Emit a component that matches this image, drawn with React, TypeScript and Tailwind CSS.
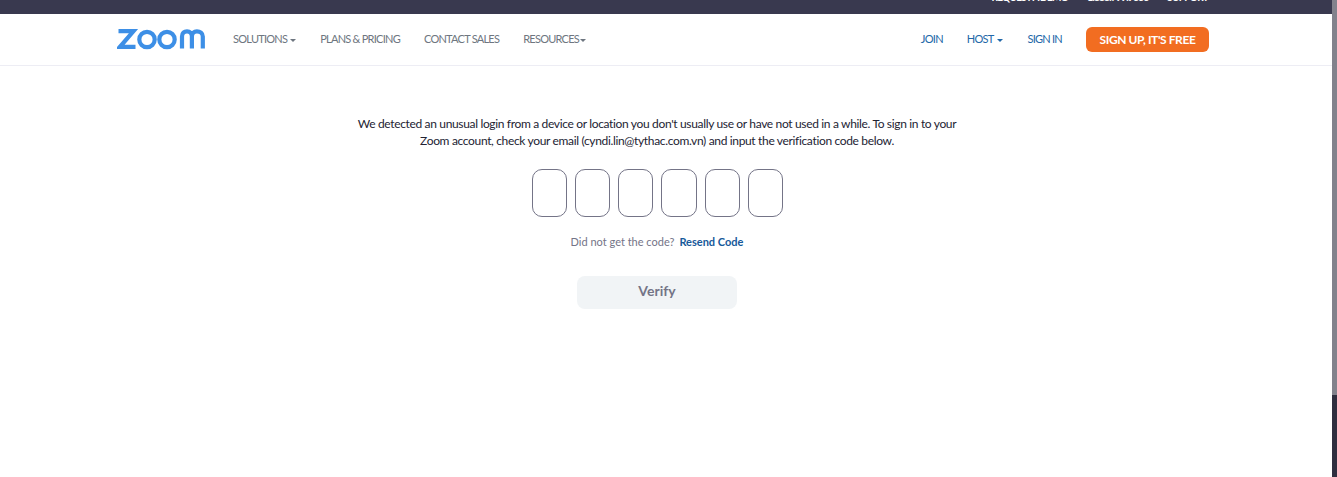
import React from 'react';

function Caret({ className }: { className: string }) {
    return <span className={`inline-block align-middle border-x-[3px] border-t-[3.5px] border-x-transparent border-t-current ${className}`} />;
}

function ZoomLogo() {
    return (
        <svg className="-mt-[2px]" width="89" height="22" viewBox="0 0 89 22" fill="none" stroke="#3d8fe6" strokeWidth="4.2" aria-label="zoom">
            <path d="M1.5 3.2H16.5L3 18.8H18.5" strokeLinejoin="miter" />
            <circle cx="30" cy="11.5" r="7.7" />
            <circle cx="50" cy="11.5" r="7.7" />
            <path d="M65 20.5V8.5C65 5 67.2 3.4 70 3.4C73 3.4 74.9 5.4 74.9 8.5V20.5M74.9 8.5C74.9 5.4 76.9 3.4 79.9 3.4C83 3.4 85.8 5.2 85.8 8.5V20.5" />
        </svg>
    );
}

export default function App() {
    return (
        <div className="flex h-[477px] w-full overflow-hidden bg-white font-['Lato',sans-serif]">
            <div className="flex min-w-0 flex-1 flex-col">
                {/* Top strip, scrolled mostly out of view */}
                <div className="flex h-[14px] items-end justify-end gap-[19px] overflow-hidden bg-[#39394f] pr-[124px] pb-[10px] text-[10px] font-bold leading-[14px] tracking-[-0.7px] text-white">
                    <span className="shrink-0">REQUEST A DEMO</span>
                    <span className="shrink-0">1.888.799.9666</span>
                    <span className="shrink-0">SUPPORT</span>
                </div>

                {/* Nav */}
                <nav className="flex h-[52px] items-center justify-between border-b border-[#ededf4] pl-[117px] pr-[123px] text-[11px] tracking-[-0.75px]">
                    <div className="flex items-center">
                        <ZoomLogo />
                        <div className="ml-[27px] flex items-center gap-[24px] text-[#6e7680]">
                            <a>SOLUTIONS<Caret className="ml-[3px]" /></a>
                            <a>PLANS &amp; PRICING</a>
                            <a>CONTACT SALES</a>
                            <a>RESOURCES<Caret className="ml-[1px]" /></a>
                        </div>
                    </div>
                    <div className="flex items-center text-[#2268a8]">
                        <a>JOIN</a>
                        <a className="ml-[24px]">HOST<Caret className="ml-[4px]" /></a>
                        <a className="ml-[24px]">SIGN IN</a>
                        <button className="ml-[24px] h-[25px] w-[123px] rounded-[6px] bg-[#f26d21] text-[12px] font-bold tracking-[-0.4px] text-white">
                            SIGN UP, IT&apos;S FREE
                        </button>
                    </div>
                </nav>

                {/* Verification form */}
                <main className="flex flex-col items-center pr-[18px] pt-[49px]">
                    <p className="w-[620px] text-center text-[12px] leading-[17px] tracking-[-0.34px] text-[#232333]">
                        We detected an unusual login from a device or location you don&apos;t usually use or have not used in a while. To sign in to your
                        <br />
                        Zoom account, check your email (cyndi.lin@tythac.com.vn) and input the verification code below.
                    </p>
                    <div className="mt-[20px] flex gap-[8px]">
                        {[0, 1, 2, 3, 4, 5].map((i) => (
                            <input key={i} maxLength={1} className={`h-[48px] rounded-[10px] border border-[#747487] bg-white ${i === 3 ? 'w-[36px]' : 'w-[35px]'}`} />
                        ))}
                    </div>
                    <div className="mt-[18px] text-[11px] leading-[14px] text-[#747487]">
                        Did not get the code?
                        <a className="ml-[5px] font-bold text-[#17599a]">Resend Code</a>
                    </div>
                    <button disabled className="mt-[27px] h-[33px] w-[160px] rounded-[8px] bg-[#f1f4f6] pb-[4px] text-[14px] font-bold text-[#747487]">
                        Verify
                    </button>
                </main>
            </div>

            {/* Scrollbar */}
            <div className="flex w-[5px] shrink-0 flex-col bg-[#2f2e3f]">
                <div className="h-[395px] bg-[#82828c]" />
            </div>
        </div>
    );
}
